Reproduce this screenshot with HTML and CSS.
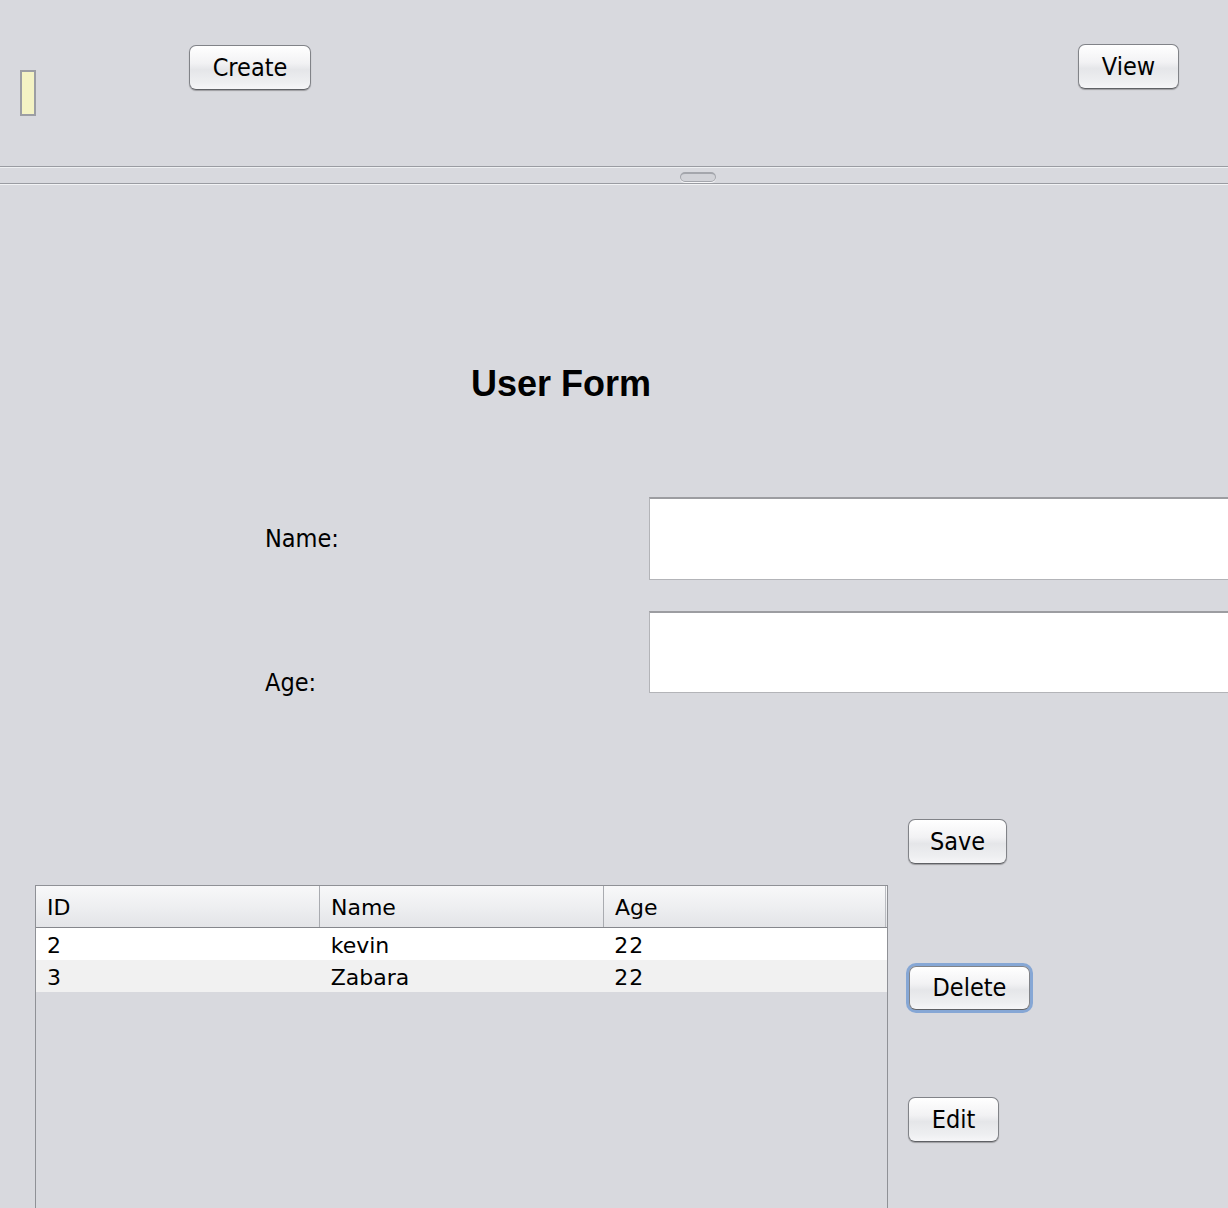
FILE: index.html
```html
<!DOCTYPE html>
<html>
<head>
<meta charset="utf-8">
<link rel="stylesheet" href="styles.css">
</head>
<body>
<div class="toolbar">
  <div class="indicator"></div>
  <button class="btn btn-create">Create</button>
  <button class="btn btn-view">View</button>
</div>
<div class="divider"><div class="handle"></div></div>
<div class="main">
  <h1 class="title">User Form</h1>
  <div class="form">
    <label class="label label-name">Name:</label>
    <div class="field field-name"></div>
    <label class="label label-age">Age:</label>
    <div class="field field-age"></div>
  </div>
  <div class="lower">
    <div class="table-wrap">
      <div class="thead">
        <div class="th">ID</div>
        <div class="th">Name</div>
        <div class="th th-last">Age</div>
        <div class="th-corner"></div>
      </div>
      <div class="row row-odd">
        <div class="td">2</div><div class="td">kevin</div><div class="td num">22</div>
      </div>
      <div class="row row-even">
        <div class="td">3</div><div class="td">Zabara</div><div class="td num">22</div>
      </div>
    </div>
    <div class="actions">
      <button class="btn btn-save">Save</button>
      <button class="btn btn-delete">Delete</button>
      <button class="btn btn-edit">Edit</button>
    </div>
  </div>
</div>
</body>
</html>
```

FILE: styles.css
```css
html, body {
  margin: 0;
  padding: 0;
}
body {
  width: 1228px;
  height: 1208px;
  overflow: hidden;
  background: #d8d9de;
  font-family: "DejaVu Sans Condensed", "DejaVu Sans", sans-serif;
  font-stretch: condensed;
  color: #000;
}

/* ---------- buttons ---------- */
.btn {
  box-sizing: border-box;
  height: 45px;
  padding: 0;
  margin: 0;
  border: 1px solid #818388;
  border-bottom-color: #5f6165;
  border-radius: 7px;
  background: linear-gradient(#ffffff 0%, #f2f2f4 40%, #e5e6e9 55%, #eeeff1 85%, #f6f6f8 100%);
  box-shadow: 0 1px 1px rgba(0, 0, 0, 0.28);
  font-family: "DejaVu Sans Condensed", "DejaVu Sans", sans-serif;
  font-stretch: condensed;
  font-size: 25px;
  line-height: 30px;
  color: #000;
  text-align: center;
}

/* ---------- toolbar ---------- */
.toolbar {
  box-sizing: border-box;
  height: 166px;
  display: flex;
  align-items: flex-start;
  padding: 0 49px 0 20px;
}
.indicator {
  box-sizing: border-box;
  width: 16px;
  height: 46px;
  margin-top: 70px;
  background: #f4f3c4;
  border: 2px solid #9c9ea4;
}
.btn-create {
  width: 122px;
  margin-top: 45px;
  margin-left: 153px;
}
.btn-view {
  width: 101px;
  margin-top: 44px;
  margin-left: auto;
}

/* ---------- split divider ---------- */
.divider {
  box-sizing: border-box;
  height: 18px;
  border-top: 1px solid #9a9ca2;
  border-bottom: 1px solid #9a9ca2;
  box-shadow: inset 0 1px 0 #eef0f2, 0 1px 0 #f2f3f5;
  margin-bottom: 1px;
  padding-top: 5px;
}
.handle {
  box-sizing: border-box;
  width: 36px;
  height: 10px;
  margin-left: 680px;
  border-radius: 5px;
  border: 1px solid #a4a6ac;
  border-top: 2px solid #a4a6ac;
  background: #d2d3d8;
  box-shadow: 0 1px 0 #f6f6f8;
}

/* ---------- main ---------- */
.main {
  padding-top: 1px;
}
.title {
  margin: 178px 0 0 471px;
  font-family: "Liberation Sans", Arial, sans-serif;
  font-stretch: normal;
  font-weight: bold;
  font-size: 36px;
  line-height: 40px;
}

.form {
  display: grid;
  grid-template-columns: 384px 700px;
  grid-template-rows: 83px 82px;
  row-gap: 31px;
  margin: 93px 0 0 265px;
}
.label {
  font-size: 25px;
  line-height: 30px;
}
.label-name {
  align-self: center;
}
.label-age {
  align-self: end;
  margin-bottom: -5px;
}
.field {
  box-sizing: border-box;
  background: #fff;
  border: 1px solid #b3b4b8;
  border-top: 2px solid #9c9da1;
}

/* ---------- lower area ---------- */
.lower {
  display: flex;
  align-items: flex-start;
  margin: 126px 0 0 35px;
}
.table-wrap {
  box-sizing: border-box;
  width: 853px;
  height: 400px;
  margin-top: 66px;
  border: 1px solid #8f9196;
  font-family: "DejaVu Sans", sans-serif;
  font-stretch: normal;
  font-size: 22px;
}
.thead {
  display: flex;
  height: 42px;
  box-sizing: border-box;
  border-bottom: 1px solid #85878c;
  background: linear-gradient(#f8f8f9 0%, #eeeff1 50%, #e3e4e7 100%);
}
.th {
  box-sizing: border-box;
  width: 284px;
  padding: 2px 0 0 11px;
  line-height: 40px;
  border-right: 1px solid #a9abb0;
}
.th-last {
  width: 282px;
  border-right: 1px solid #b9bbc0;
}
.th-corner {
  flex: 1;
}
.row {
  display: flex;
  box-sizing: border-box;
  height: 32px;
  padding-top: 3px;
  line-height: 29px;
}
.row-odd {
  background: #ffffff;
}
.row-even {
  background: #f1f1f1;
}
.td {
  box-sizing: border-box;
  width: 284px;
  padding-left: 11px;
}
.num {
  letter-spacing: 1px;
}

.actions {
  display: flex;
  flex-direction: column;
  align-items: flex-start;
  margin-left: 20px;
}
.btn-save {
  width: 99px;
}
.btn-delete {
  width: 121px;
  height: 44px;
  margin-top: 102px;
  margin-left: 1px;
  box-shadow: 0 0 0 3px #86a7d5, 0 1px 1px rgba(0, 0, 0, 0.28);
}
.btn-edit {
  width: 91px;
  margin-top: 87px;
}
```
